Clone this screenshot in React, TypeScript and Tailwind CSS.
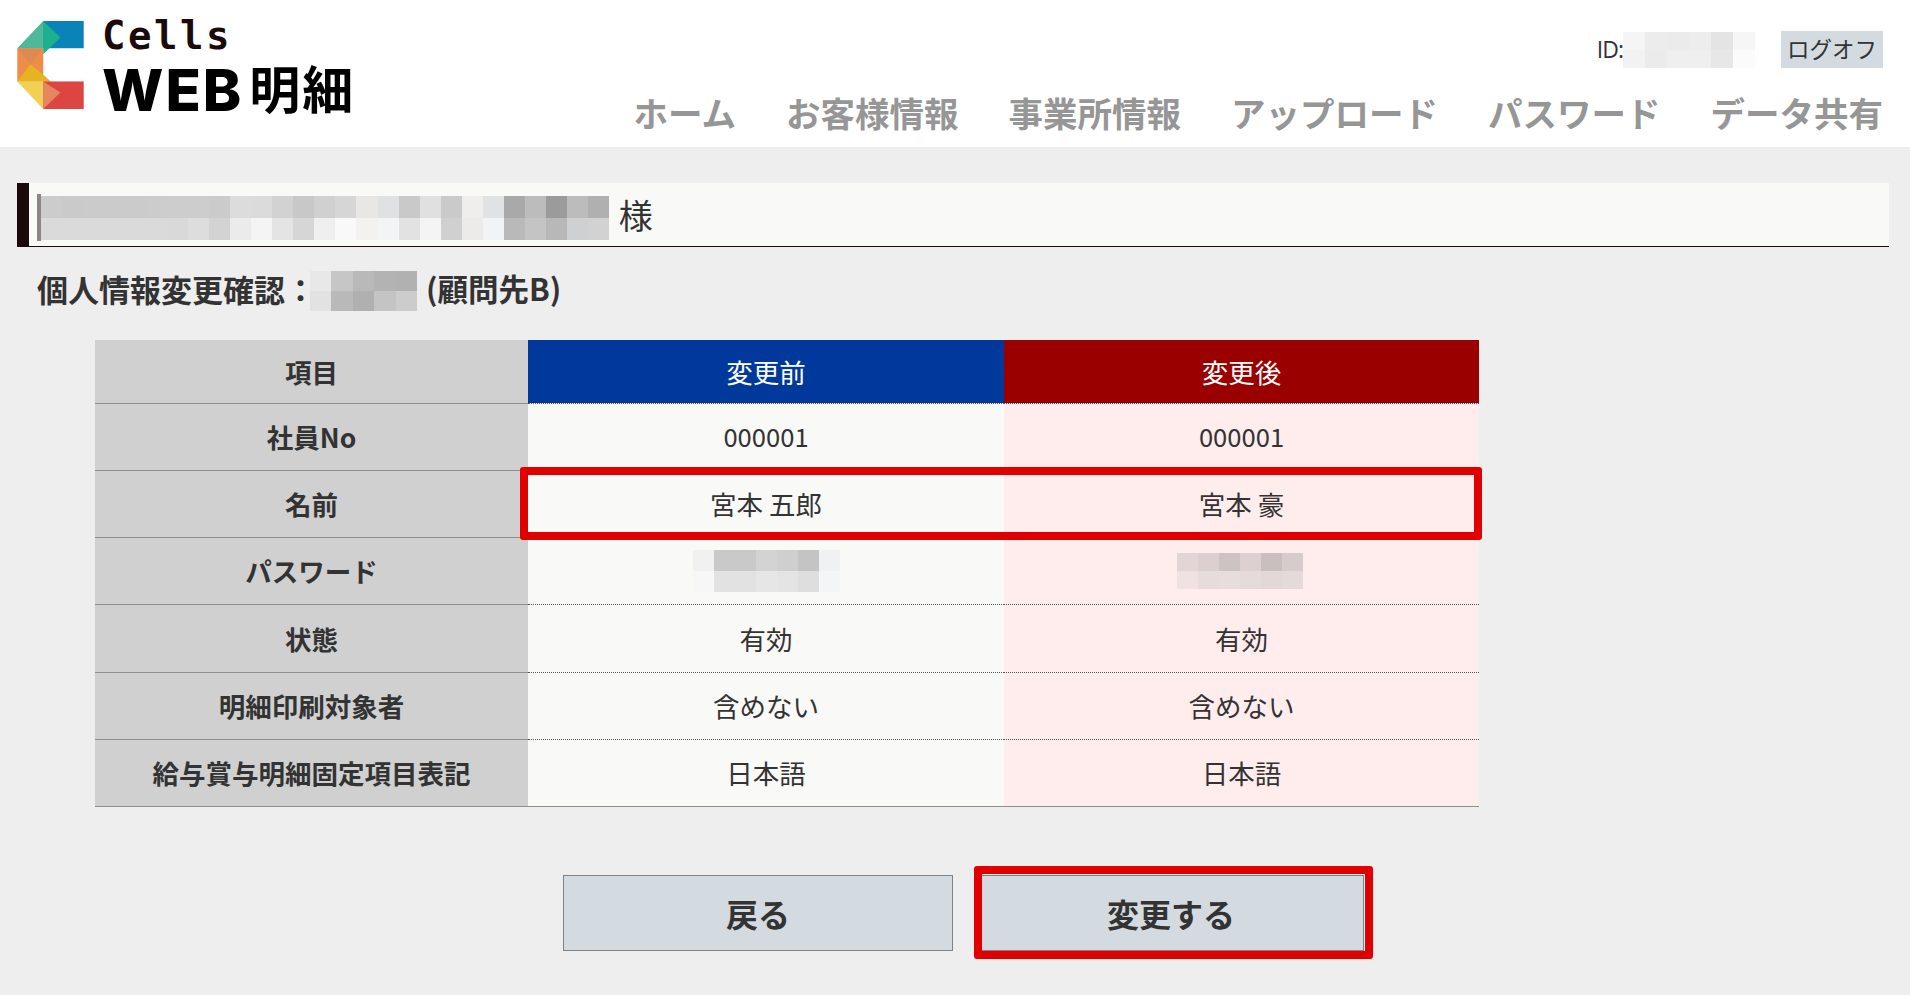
const jp = "font-['Noto_Sans_CJK_JP',sans-serif]";

const navItems = ["ホーム", "お客様情報", "事業所情報", "アップロード", "パスワード", "データ共有"];

const rows = [
  { label: "社員No", before: "000001", after: "000001" },
  { label: "名前", before: "宮本 五郎", after: "宮本 豪" },
  { label: "パスワード", before: null, after: null },
  { label: "状態", before: "有効", after: "有効" },
  { label: "明細印刷対象者", before: "含めない", after: "含めない" },
  { label: "給与賞与明細固定項目表記", before: "日本語", after: "日本語" },
];

// censored areas in the picture: rows of colour blocks
function Mosaic({ cells, cellW, cellH }: { cells: string[][]; cellW: number; cellH: number }) {
  return (
    <div className="flex shrink-0 flex-col">
      {cells.map((row, i) => (
        <div key={i} className="flex">
          {row.map((c, j) => (
            <div key={j} style={{ backgroundColor: c, width: cellW, height: cellH }} />
          ))}
        </div>
      ))}
    </div>
  );
}

const nameMosaic = [
  ["#cccccc", "#cacaca", "#cbcbcb", "#cbcbcb", "#cbcbcb", "#cccccc", "#cdcdcd", "#cdcdcd", "#cbcbcb", "#dcdcdc", "#dbdbdb", "#d2d2d2", "#c8c8c8", "#d0d0d0", "#d6d6d6", "#e8e7e5", "#e0e1e3", "#c9c9c9", "#e0e0e0", "#cacaca", "#f0eeec", "#e0e2e4", "#a9a9a9", "#bcbcbc", "#9b9b9b", "#bcbcbc", "#b0b0b0"],
  ["#dadada", "#dadada", "#dadada", "#dadada", "#dadada", "#dadada", "#d9d9d9", "#dddddd", "#d3d3d3", "#ebebeb", "#f4f4f4", "#e4e4e4", "#d6d6d6", "#efefef", "#f9f9f9", "#f3f2ef", "#f3f4f6", "#e2e2e2", "#f4f4f4", "#d0d0d0", "#ecebea", "#f2f3f5", "#b9b9b9", "#c4c4c4", "#b8b8b8", "#cfd0d2", "#d2d2d2"],
];

const subjectMosaic = [
  ["#e8e8e8", "#c6c6c6", "#b9b9b9", "#b3b3b3", "#b1b1b1"],
  ["#e2e2e2", "#b9b9b9", "#b0b0b0", "#c4c4c4", "#cccccc"],
];

const idMosaic = [
  ["#f5f5f5", "#ececec", "#ebebeb", "#ededed", "#e4e4e4", "#f6f6f6"],
  ["#f2f2f2", "#ebebeb", "#efefef", "#efefef", "#e7e7e7", "#fbfbfb"],
];

const passBefore = [
  ["#f1f1f1", "#c9c9c9", "#c9c9c9", "#d3d3d3", "#cfcfcf", "#c4c4c4", "#f0f1f2"],
  ["#f7f7f7", "#e2e2e2", "#e2e2e2", "#e6e6e6", "#e4e4e4", "#dedede", "#f4f5f6"],
];

const passAfter = [
  ["#e3d5d5", "#dccfcf", "#cdc3c3", "#dcd0d0", "#c9bfbf", "#d6cccc"],
  ["#f0e2e2", "#e6dcdc", "#e8dddd", "#e6dada", "#e3d8d8", "#e5dada"],
];

function Logo() {
  return (
    <svg viewBox="22 18 200 265" className="h-[88px] w-[67px] shrink-0">
      <rect x="100" y="18" width="122" height="82" fill="#0a84b8" />
      <polygon points="22,100 100,18 100,100" fill="#4db89a" />
      <polygon points="100,18 152,68 100,118" fill="#1db08c" />
      <polygon points="22,100 100,100 100,118 100,180 122,200 22,200" fill="#f08c4a" />
      <polygon points="22,100 100,100 62,148" fill="#dd8a52" />
      <polygon points="22,200 62,148 100,180 122,200" fill="#e6b422" />
      <polygon points="22,200 100,200 100,283" fill="#f2cf55" />
      <rect x="100" y="200" width="122" height="83" fill="#dd4540" />
      <polygon points="100,200 152,233 100,283" fill="#e8845e" />
    </svg>
  );
}

export default function App() {
  return (
    <div className={`min-h-screen bg-[#eeeeee] text-[#333333] ${jp}`}>
      {/* header */}
      <header className="flex h-[147px] justify-between bg-white pl-[17px] pr-[27px]">
        <div className="flex items-start gap-[18px] pt-[21px]">
          <Logo />
          <div className="text-black">
            <div className="-mt-[4px] h-[38px] font-['DejaVu_Sans_Mono',monospace] text-[39px] font-bold leading-[38px] tracking-[2.5px] text-[#1a0a0a]">
              Cells
            </div>
            <div className="mt-[2px] flex h-[60px] items-center font-bold leading-none">
              <span className="mr-[6px] mt-[5px] font-['Inter',sans-serif] text-[58px] font-extrabold tracking-[2px]">WEB</span>
              <span className="text-[51px] tracking-[2px]">明細</span>
            </div>
          </div>
        </div>
        <div className="flex flex-col items-end">
          <div className="mt-[31px] flex h-[37px] items-center">
            <span className="font-['Open_Sans',sans-serif] text-[23px] tracking-[-1px]">ID:</span>
            <Mosaic cells={idMosaic} cellW={22} cellH={18} />
            <button className="ml-[26px] h-[37px] w-[102px] bg-[#d3dbe0] pb-[3px] text-[22.5px] leading-none">ログオフ</button>
          </div>
          <nav className="mt-[22px] flex gap-[50px] text-[34.5px] font-bold leading-[44px] text-[#969696]">
            {navItems.map((n) => (
              <span key={n}>{n}</span>
            ))}
          </nav>
        </div>
      </header>

      <main className="pl-[17px] pr-[21px] pt-[36px]">
        {/* customer name */}
        <div className="flex h-[64px] items-center gap-[10px] border-b border-l-[12px] border-b-[#1a0a0a] border-l-[#1a0a0a] bg-[#f9f9f8] pl-[8px]">
          <div className="flex items-center pt-[6px]">
            <div className="h-[47px] w-[4px] bg-[#8f8585]" />
            <Mosaic cells={nameMosaic} cellW={21.04} cellH={22} />
          </div>
          <span className="text-[34px] font-normal leading-none">様</span>
        </div>

        {/* page title */}
        <div className="mt-[24px] flex h-[40px] items-center pl-[20px] text-[31px] font-bold leading-none">
          <span className="mb-[5px]">個人情報変更確認：</span>
          <span className="-ml-[6px]">
            <Mosaic cells={subjectMosaic} cellW={21.4} cellH={20} />
          </span>
          <span className="mb-[5px] ml-[9px] text-[30.5px]">(顧問先B)</span>
        </div>

        {/* comparison table */}
        <div className="relative ml-[78px] mt-[29px] w-[1384px]">
          <table className="w-full table-fixed border-collapse text-center text-[26.5px]">
            <thead>
              <tr className="h-[63px]">
                <th className="w-[433px] bg-[#d0d0d0] pt-[2px] font-bold">項目</th>
                <th className="w-[476px] bg-[#00399b] pt-[2px] font-normal text-white">変更前</th>
                <th className="w-[475px] bg-[#9b0000] pt-[2px] font-normal text-white">変更後</th>
              </tr>
            </thead>
            <tbody>
              {rows.map((r) => {
                const digits = r.label === "社員No" ? "text-[25.6px]" : "";
                return (
                  <tr key={r.label} className="h-[67.3px]">
                    <th className="border-t border-t-[#8e8e8e] bg-[#d0d0d0] p-0 font-bold">{r.label}</th>
                    <td className={`border-t border-dotted border-t-[#555555] bg-[#f9f9f8] p-0 ${digits}`}>
                      {r.before ?? (
                        <div className="flex justify-center">
                          <Mosaic cells={passBefore} cellW={21} cellH={21} />
                        </div>
                      )}
                    </td>
                    <td className={`border-t border-dotted border-t-[#555555] bg-[#ffecec] p-0 ${digits}`}>
                      {r.after ?? (
                        <div className="flex justify-center pr-[4px]">
                          <Mosaic cells={passAfter} cellW={21} cellH={18} />
                        </div>
                      )}
                    </td>
                  </tr>
                );
              })}
              <tr>
                <td colSpan={3} className="border-t border-t-[#8e8e8e] p-0" />
              </tr>
            </tbody>
          </table>
          {/* red highlight over the name row */}
          <div className="absolute left-[425px] top-[127px] h-[73px] w-[962px] rounded-[3px] border-[8px] border-[#e00000]" />
        </div>

        {/* buttons */}
        <div className="ml-[546px] mt-[68px] flex gap-[21px]">
          <button className="h-[76px] w-[390px] border border-[#7d8488] bg-[#d3dbe0] text-[32px] font-bold">戻る</button>
          <div className="relative">
            <button className="h-[76px] w-[390px] border border-[#7d8488] bg-[#d3dbe0] pl-[4px] text-[32px] font-bold">変更する</button>
            <div className="absolute -top-[9px] left-0 h-[93px] w-[399px] rounded-[3px] border-[8px] border-[#e00000]" />
          </div>
        </div>
      </main>
    </div>
  );
}
